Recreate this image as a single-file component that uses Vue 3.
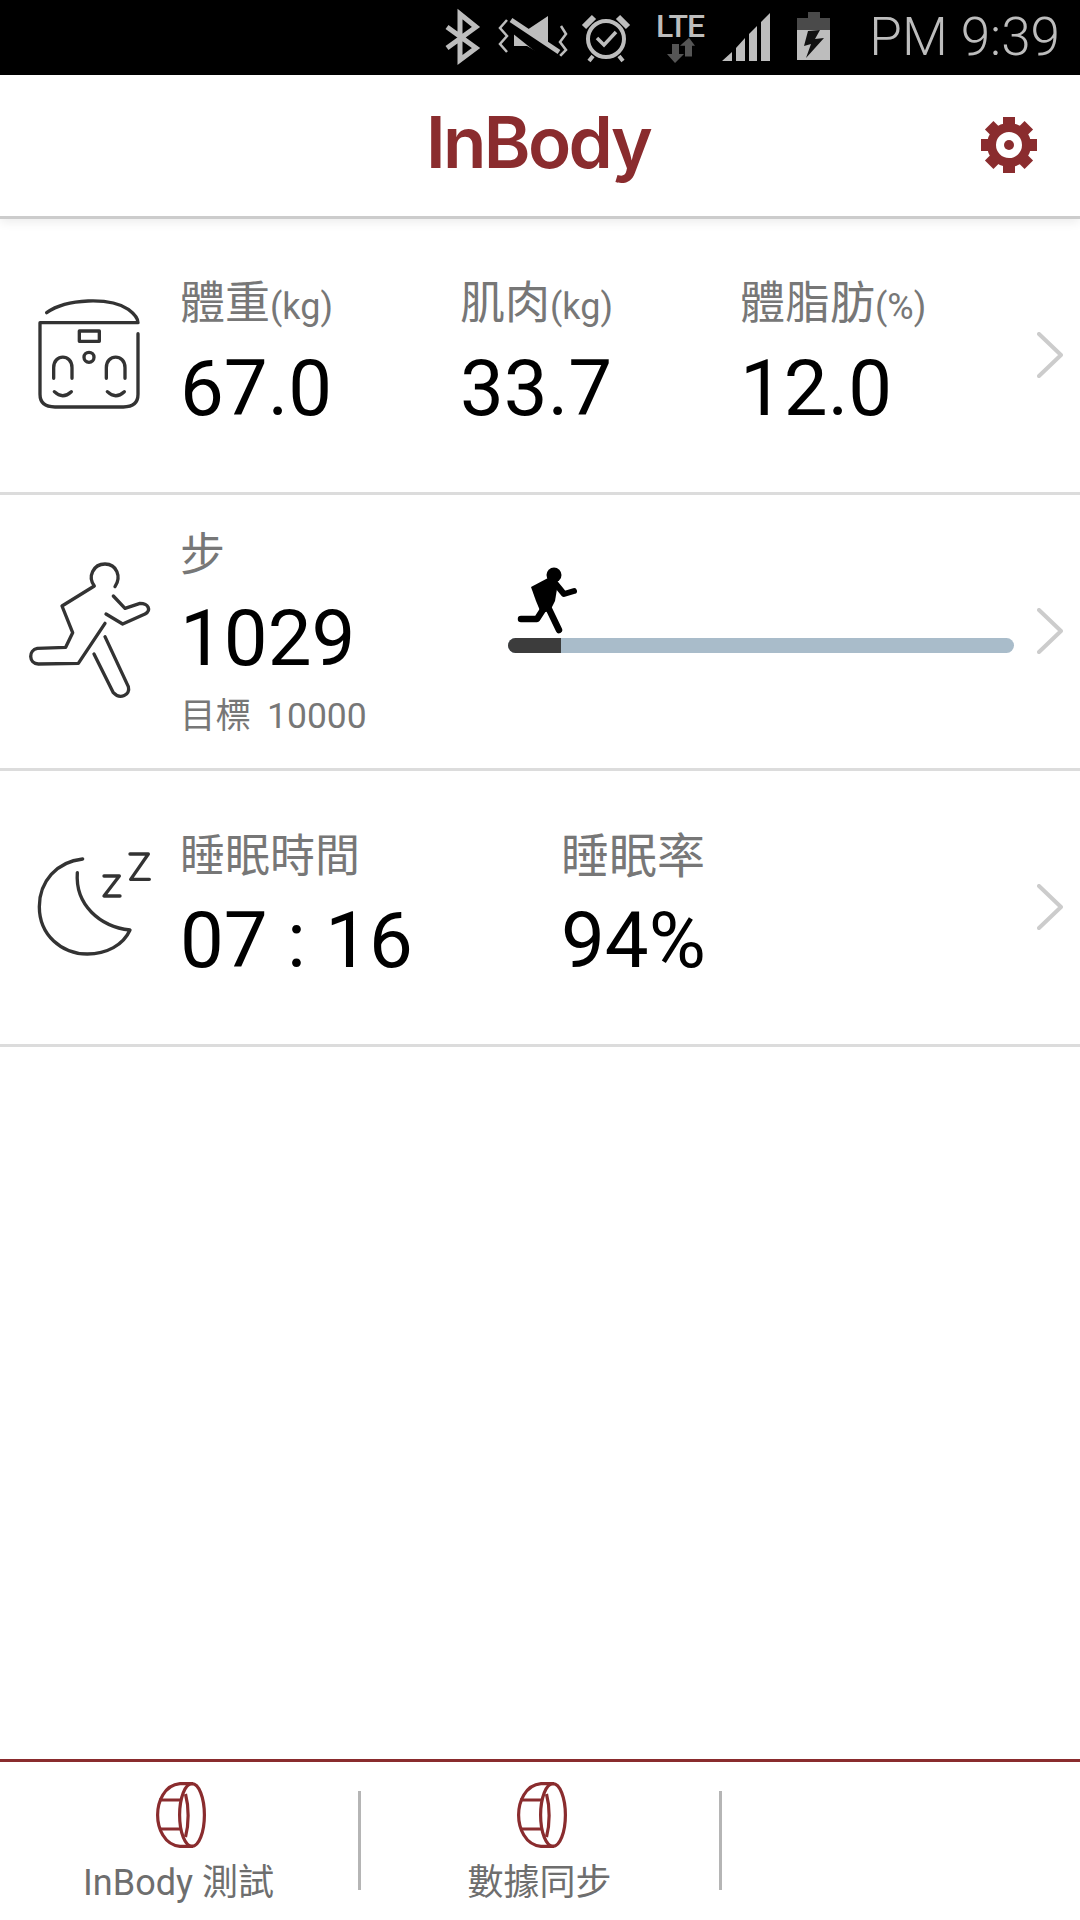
<script setup>
const teeth = [0, 45, 90, 135, 180, 225, 270, 315]
const bodyStats = [
  { label: '體重', unit: '(kg)', value: '67.0' },
  { label: '肌肉', unit: '(kg)', value: '33.7' },
  { label: '體脂肪', unit: '(%)', value: '12.0' },
]
const sleepStats = [
  { label: '睡眠時間', value: '07 : 16', cls: 'wide' },
  { label: '睡眠率', value: '94%', cls: 'rate' },
]
const tabs = ['InBody 測試', '數據同步', '']
</script>

<template>
  <div class="page">
    <div class="statusbar">
      <svg class="status-icons" width="385" height="75" viewBox="445 0 385 75">
        <g fill="none" stroke="#bdbdbd" stroke-width="4">
          <path d="M447 27 L476 48 L460 60 V14 L476 27 L447 48" stroke-width="5" />
          <path d="M507 20 L500 28 L507 36 L500 44 L507 52" stroke-width="2.5" />
          <path d="M561 26 L566 34 L560 42 L566 50 L560 56" stroke-width="2.5" />
          <circle cx="606" cy="39" r="18" />
          <path d="M597 38 L604 45 L616 32" stroke-width="3.5" />
          <path d="M584 27 L594 17" stroke-width="6" />
          <path d="M618 17 L628 27" stroke-width="6" />
          <path d="M593 56 L589 61 M619 56 L623 61" stroke-width="4" />
        </g>
        <path d="M514 30 H527 L548 16 V58 L527 46 H514 Z" fill="#bdbdbd" />
        <path d="M508 22 L558 62" stroke="#000" stroke-width="12" fill="none" />
        <path d="M511 20 L559 52" stroke="#bdbdbd" stroke-width="5" fill="none" />
        <text x="656" y="37" class="lte">LTE</text>
        <path d="M672 44 H679 V54 H684 L675 63 L667 54 H672 Z" fill="#555" />
        <path d="M685 54 V42 H680 L689 33 L695 42 H692 V54 Z" fill="#555" transform="translate(0 8) scale(1 .9)" />
        <path d="M722 61 L732 52 V61 Z M736 48 L745 38 V61 H736 Z M749 34 L757 26 V61 H749 Z M761 22 L770 13 V61 H761 Z" fill="#bdbdbd" />
        <path d="M808 12 H820 V18 H830 V60 H797 V18 H808 Z" fill="#bdbdbd" />
        <path d="M797 18 H830 V30 H797 Z" fill="#4a4a4a" />
        <path d="M808 12 H820 V18 H808 Z" fill="#4a4a4a" />
        <path d="M820 30 L808 31 L804 46 L811 44 L806 58 L824 38 L815 39 Z" fill="#111" />
      </svg>
      <span class="clock">PM 9:39</span>
    </div>

    <header class="header">
      <span class="logo">InBody</span>
      <svg class="gear" width="58" height="58" viewBox="-29 -29 58 58">
        <rect v-for="t in teeth" :key="t" x="-6" y="-28" width="12" height="12" fill="#8a2c2e" :transform="`rotate(${t})`" />
        <circle r="17.5" fill="none" stroke="#8a2c2e" stroke-width="9" />
        <circle r="5" fill="#8a2c2e" />
      </svg>
    </header>

    <main class="main">
      <section class="row row-body">
        <svg class="row-icon" width="180" height="273" viewBox="0 -126 540 819">
          <g fill="none" stroke="#333" stroke-width="10" stroke-linecap="round" stroke-linejoin="round">
            <path d="M140 155 C200 112 330 108 385 145 C405 160 414 172 414 185 H120 V400 Q120 438 165 438 H370 Q414 438 414 400 V218" />
            <rect x="238" y="210" width="60" height="31" />
            <circle cx="267" cy="289" r="15" />
            <path d="M161 352 V320 C161 278 216 278 216 320 V352" />
            <path d="M319 352 V320 C319 278 375 278 375 320 V352" />
            <path d="M163 392 Q188 416 214 392" />
            <path d="M322 392 Q347 416 373 392" />
          </g>
        </svg>
        <div class="stats">
          <div v-for="s in bodyStats" :key="s.label" class="stat">
            <div class="label">{{ s.label }}<span class="unit">{{ s.unit }}</span></div>
            <div class="value">{{ s.value }}</div>
          </div>
        </div>
        <svg class="chev" width="26" height="46" viewBox="0 0 26 46"><path d="M2 2 L24 23 L2 44" fill="none" stroke="#ccc" stroke-width="4" stroke-linecap="round" stroke-linejoin="round" /></svg>
      </section>

      <section class="row row-steps">
        <svg class="row-icon" width="180" height="273" viewBox="0 705 540 819">
          <g fill="none" stroke="#333" stroke-width="10" stroke-linecap="round" stroke-linejoin="round">
            <path d="M345 980 C365 950 350 912 315 912 C280 912 262 950 283 978 L186 1038 L218 1118 L197 1162 L112 1165 C85 1170 85 1210 115 1212 L235 1210 L315 1090" />
            <path d="M340 1008 L375 1045 L420 1030 C445 1030 455 1050 435 1062 L368 1092 L318 1062" />
            <path d="M315 1130 L385 1280 C392 1305 360 1320 340 1298 L282 1182" />
          </g>
        </svg>
        <div class="steps">
          <div class="label">步</div>
          <div class="value">1029</div>
          <div class="goal">目標<span class="goal-num">10000</span></div>
        </div>
        <div class="progress">
          <svg class="runner" width="65" height="68" viewBox="515 565 65 68">
            <circle cx="554" cy="574" r="7.5" />
            <path d="M531 586 L548 577 L558 582 L555 600 L550 610 L541 612 L536 600 Z" />
            <g fill="none" stroke="#000" stroke-linecap="round" stroke-linejoin="round">
              <path d="M546 604 L537 618 H521" stroke-width="6.5" />
              <path d="M547 604 L559 629" stroke-width="6.5" />
              <path d="M555 582 L564 593 L574 590" stroke-width="6" />
            </g>
          </svg>
          <div class="track"><div class="fill" :style="{ width: '53px' }"></div></div>
        </div>
        <svg class="chev" width="26" height="46" viewBox="0 0 26 46"><path d="M2 2 L24 23 L2 44" fill="none" stroke="#ccc" stroke-width="4" stroke-linecap="round" stroke-linejoin="round" /></svg>
      </section>

      <section class="row row-sleep">
        <svg class="row-icon" width="180" height="273" viewBox="0 -27 540 819">
          <g fill="none" stroke="#333" stroke-width="10" stroke-linecap="round" stroke-linejoin="round">
            <path d="M248 237 C170 245 118 305 118 380 C118 465 185 522 262 522 C320 522 370 495 390 450 C300 440 225 375 232 278" />
            <path d="M312 288 H358 L312 348 H360" />
            <path d="M390 222 H445 L392 298 H448" />
          </g>
        </svg>
        <div class="stats">
          <div v-for="s in sleepStats" :key="s.label" class="stat" :class="s.cls">
            <div class="label">{{ s.label }}</div>
            <div class="value">{{ s.value }}</div>
          </div>
        </div>
        <svg class="chev" width="26" height="46" viewBox="0 0 26 46"><path d="M2 2 L24 23 L2 44" fill="none" stroke="#ccc" stroke-width="4" stroke-linecap="round" stroke-linejoin="round" /></svg>
      </section>
    </main>

    <footer class="footer">
      <div v-for="(t, i) in tabs" :key="i" class="tab" :class="{ 'tab-empty': !t }">
        <template v-if="t">
          <svg width="50" height="66" viewBox="0 0 50 66">
            <g fill="none" stroke="#8a2c2e" stroke-width="3.2">
              <path d="M37 1.6 H24 C8 3 1.6 20 1.6 33 C1.6 46 8 63 24 64.4 H37" />
              <ellipse cx="36" cy="33" rx="12.4" ry="31.4" />
              <path d="M29.5 12 C33 25 33 42 29.5 55" />
              <path d="M3 18 H24 M3 47 H24" />
            </g>
          </svg>
          <span class="tab-label">{{ t }}</span>
        </template>
      </div>
    </footer>
  </div>
</template>

<style scoped>
.page {
  width: 1080px;
  height: 1920px;
  display: flex;
  flex-direction: column;
  background: #fff;
  font-family: Roboto, "Noto Sans CJK TC", sans-serif;
  overflow: hidden;
}
.statusbar {
  height: 75px;
  flex: none;
  background: #000;
  display: flex;
  align-items: center;
  justify-content: flex-end;
  padding-right: 20px;
}
.status-icons {
  margin-right: 39px;
}
.lte {
  font-family: Roboto, sans-serif;
  font-size: 32px;
  font-weight: 500;
  fill: #bdbdbd;
  letter-spacing: -1px;
}
.clock {
  font-size: 53px;
  font-weight: 300;
  color: #bdbdbd;
  line-height: 75px;
}
.header {
  height: 144px;
  flex: none;
  box-sizing: border-box;
  border-bottom: 3px solid #ccc;
  box-shadow: 0 3px 10px rgba(0, 0, 0, 0.08);
  position: relative;
  display: flex;
  align-items: center;
  justify-content: center;
}
.logo {
  font-family: Inter, sans-serif;
  font-weight: 600;
  font-size: 71px;
  letter-spacing: -2.6px;
  color: #8a2c2e;
  line-height: 1;
  padding-right: 4px;
  position: relative;
  top: -3px;
}
.gear {
  position: absolute;
  right: 42px;
  top: 41px;
}
.main {
  flex: 1;
}
.row {
  height: 276px;
  box-sizing: border-box;
  border-bottom: 3px solid #dcdcdc;
  display: flex;
  align-items: center;
  position: relative;
}
.row-icon {
  flex: none;
  align-self: flex-start;
}
.stats {
  flex: 1;
  display: flex;
  align-self: flex-start;
  padding-top: 52px;
}
.row-sleep .stats {
  padding-top: 53px;
}
.stat {
  width: 280px;
}
.stat.wide {
  width: 381px;
}
.label {
  font-size: 45px;
  line-height: 66px;
  color: #777;
}
.rate .label {
  font-size: 48px;
}
.unit {
  font-size: 36px;
}
.value {
  font-size: 78px;
  line-height: 90px;
  margin-top: 4px;
  color: #000;
}
.row-sleep .value {
  margin-top: 6px;
}
.steps {
  width: 328px;
  flex: none;
  align-self: flex-start;
  padding-top: 28px;
}
.row-steps .value {
  margin-top: 5px;
}
.goal {
  font-size: 35.5px;
  line-height: 48px;
  margin-top: 8px;
  color: #777;
}
.goal-num {
  margin-left: 16px;
}
.progress {
  width: 506px;
  flex: none;
  align-self: flex-start;
  padding-top: 71px;
}
.runner {
  display: block;
  margin-left: 7px;
}
.track {
  height: 15px;
  margin-top: 4px;
  background: #a9bcca;
  border-radius: 8px;
  overflow: hidden;
}
.fill {
  height: 100%;
  background: #3c3c3c;
}
.chev {
  position: absolute;
  right: 17px;
  top: 113px;
}
.footer {
  height: 161px;
  flex: none;
  box-sizing: border-box;
  border-top: 3px solid #8a2c2e;
  display: flex;
}
.tab {
  width: 361px;
  flex: none;
  display: flex;
  flex-direction: column;
  align-items: center;
  padding-top: 20px;
  position: relative;
}
.tab::after {
  content: "";
  position: absolute;
  right: 0;
  top: 29px;
  width: 3px;
  height: 99px;
  background: #b5b5b5;
}
.tab-empty::after {
  display: none;
}
.tab-label {
  font-size: 36px;
  line-height: 48px;
  color: #6e6e6e;
  margin-top: 11px;
  padding-right: 4px;
}
</style>

<style>
body {
  background: #fff;
}
</style>
